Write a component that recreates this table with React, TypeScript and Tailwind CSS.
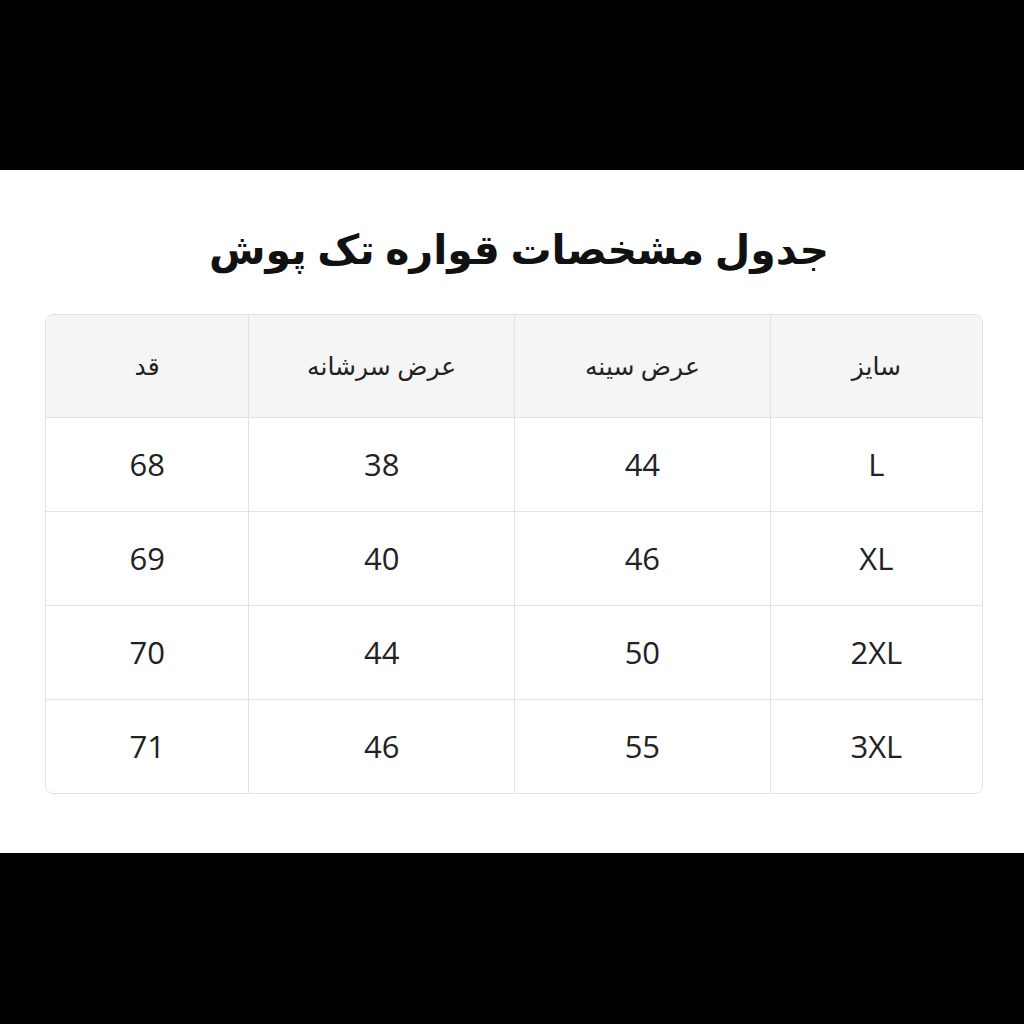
const header = ['سایز', 'عرض سینه', 'عرض سرشانه', 'قد'];

const rows = [
  ['L', '44', '38', '68'],
  ['XL', '46', '40', '69'],
  ['2XL', '50', '44', '70'],
  ['3XL', '55', '46', '71'],
];

const widths = ['w-[212px]', 'w-[256px]', 'w-[266px]', 'w-[203px]'];

export default function App() {
  return (
    <div className="flex h-screen flex-col bg-black" style={{ fontFamily: '"Open Sans", "DejaVu Sans", sans-serif' }}>
      <div className="h-[170px] shrink-0 bg-black" />
      <div className="flex flex-1 flex-col items-center bg-white pl-[4px]" dir="rtl">
        <h1 className="mt-[48px] pl-[10px] text-[41px] font-bold leading-[60px] text-[#111]">
          جدول مشخصات قواره تک پوش
        </h1>
        <div className="mt-[36px] w-[938px] overflow-hidden rounded-lg border border-[#e2e2e2]">
          <table className="w-full border-collapse text-center">
            <thead>
              <tr className="h-[102px] bg-[#f5f5f5]">
                {header.map((h, i) => (
                  <th
                    key={h}
                    className={`${widths[i]} border-l border-[#e2e2e2] text-[25px] font-normal text-[#222] last:border-l-0`}
                  >
                    {h}
                  </th>
                ))}
              </tr>
            </thead>
            <tbody>
              {rows.map((r) => (
                <tr key={r[0]} className="h-[94px] border-t border-[#e2e2e2]">
                  {r.map((c, i) => (
                    <td
                      key={i}
                      className="border-l border-[#e2e2e2] text-[31px] text-[#222] last:border-l-0"
                    >
                      {c}
                    </td>
                  ))}
                </tr>
              ))}
            </tbody>
          </table>
        </div>
      </div>
      <div className="h-[171px] shrink-0 bg-black" />
    </div>
  );
}
